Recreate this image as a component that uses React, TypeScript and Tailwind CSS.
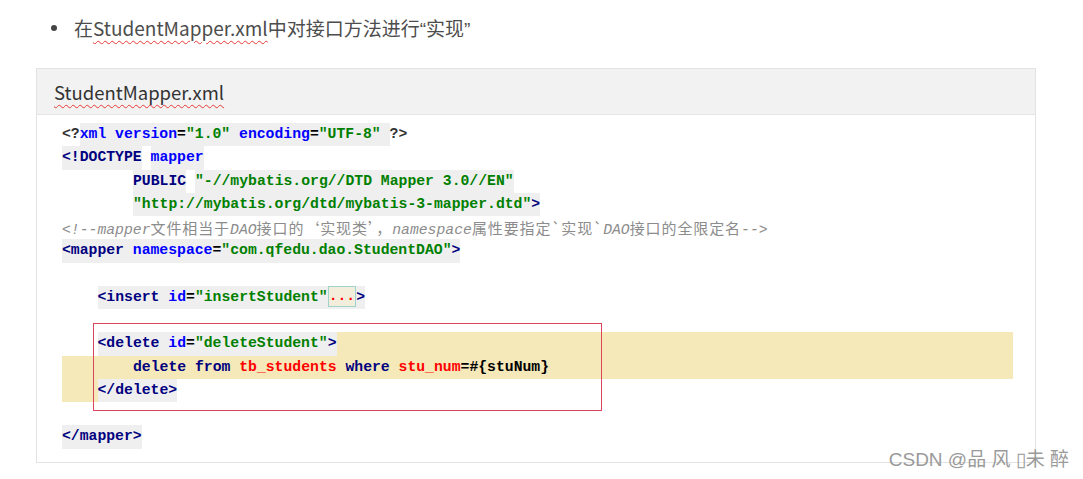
import React from "react";

const TAG = "text-[#000080]";
const ATTR = "text-[#0000ff]";
const STR = "text-[#008000]";
const SQL = "text-[#ff0000]";
const HL = "bg-[#efefef]";
const SEL = "bg-[#f5e9b9]";

function Row({ children, className = "" }: { children?: React.ReactNode; className?: string }) {
    return <div className={`flex h-[23.25px] items-stretch whitespace-pre leading-[23.25px] ${className}`}>{children}</div>;
}

function Seg({ children, className = "" }: { children?: React.ReactNode; className?: string }) {
    return <span className={`block whitespace-pre ${className}`}>{children}</span>;
}

function Cjk({ children }: { children: React.ReactNode }) {
    return <span className="font-['Noto_Sans_CJK_SC'] text-[15px] font-normal not-italic tracking-[0.9px]">{children}</span>;
}

export default function App() {
    return (
        <div className="relative h-[479px] w-[1083px] overflow-hidden bg-white">
            <div className="flex h-[56px] items-center pl-[51px]">
                <span className="h-[6px] w-[6px] rounded-full bg-[#444]" />
                <p className="ml-[17px] font-['Noto_Sans_CJK_SC',sans-serif] text-[19px] leading-none text-[#4d4d4d]">
                    在
                    <span className="underline decoration-[#e53935] decoration-wavy decoration-1 underline-offset-[4px]">
                        StudentMapper.xml
                    </span>
                    中对接口方法进行<span className="font-['Liberation_Sans']">“</span>实现
                    <span className="font-['Liberation_Sans']">”</span>
                </p>
            </div>

            <div className="ml-[36px] mt-[12px] h-[395px] w-[1000px] border border-[#e3e3e3]">
                <div className="flex h-[46px] items-center border-b border-[#e6e6e6] bg-[#f2f2f2] pl-[17px] pt-[2px]">
                    <span className="font-['Noto_Sans_CJK_SC',sans-serif] text-[18.5px] leading-none text-[#333] underline decoration-[#e53935] decoration-wavy decoration-1 underline-offset-[4px]">
                        StudentMapper.xml
                    </span>
                </div>

                <div className="ml-[25px] w-[951px] pt-[8px] font-['Liberation_Mono',monospace] text-[14.75px] font-bold text-[#000]">
                    <Row>
                        <Seg className="text-[#333]">{"<?"}</Seg>
                        <Seg className={HL}>
                            <span className={ATTR}>xml version</span>=<span className={STR}>"1.0"</span>{" "}
                            <span className={ATTR}>encoding</span>=<span className={STR}>"UTF-8"</span>{" "}
                        </Seg>
                        <Seg className="text-[#333]">{"?>"}</Seg>
                    </Row>
                    <Row>
                        <Seg className={`${HL} ${TAG}`}>{"<!DOCTYPE"}</Seg>
                        <Seg>{" "}</Seg>
                        <Seg className={`${HL} ${ATTR}`}>mapper</Seg>
                    </Row>
                    <Row>
                        <Seg className="w-[71px]" />
                        <Seg className={`${HL} ${TAG}`}>PUBLIC</Seg>
                        <Seg>{" "}</Seg>
                        <Seg className={`${HL} ${STR}`}>"-//mybatis.org//DTD Mapper 3.0//EN"</Seg>
                    </Row>
                    <Row>
                        <Seg className="w-[71px]" />
                        <Seg className={HL}>
                            <span className={STR}>"http://mybatis.org/dtd/mybatis-3-mapper.dtd"</span>
                            <span className={TAG}>{">"}</span>
                        </Seg>
                    </Row>
                    <Row>
                        <Seg className="font-normal italic text-[#8c8c8c]">
                            {"<!--mapper"}
                            <Cjk>文件相当于</Cjk>DAO<Cjk>接口的‘实现类’，</Cjk>namespace<Cjk>属性要指定`实现`</Cjk>DAO
                            <Cjk>接口的全限定名</Cjk>
                            {"-->"}
                        </Seg>
                    </Row>
                    <Row>
                        <Seg className={HL}>
                            <span className={TAG}>{"<mapper "}</span>
                            <span className={ATTR}>namespace</span>=<span className={STR}>"com.qfedu.dao.StudentDAO"</span>
                            <span className={TAG}>{">"}</span>
                        </Seg>
                    </Row>
                    <Row />
                    <Row>
                        <Seg className="w-[35.5px]" />
                        <Seg className={HL}>
                            <span className={TAG}>{"<insert "}</span>
                            <span className={ATTR}>id</span>=<span className={STR}>"insertStudent"</span>
                            <span className="inline-block h-[21px] border border-[#9fd3cc] bg-[#f3eedc] align-middle leading-[19px] text-[#ff0000]">
                                ...
                            </span>
                            <span className={TAG}>{">"}</span>
                        </Seg>
                    </Row>
                    <Row />
                    <Row>
                        <Seg className="w-[35.5px]" />
                        <Seg className={HL}>
                            <span className={TAG}>{"<delete "}</span>
                            <span className={ATTR}>id</span>=<span className={STR}>"deleteStudent"</span>
                            <span className={TAG}>{">"}</span>
                        </Seg>
                        <span className={`flex-1 ${SEL}`} />
                    </Row>
                    <Row className={SEL}>
                        <Seg className="w-[71px]" />
                        <Seg>
                            <span className={TAG}>delete from </span>
                            <span className={SQL}>tb_students</span>
                            <span className={TAG}> where </span>
                            <span className={SQL}>stu_num</span>=#{"{"}stuNum{"}"}
                        </Seg>
                    </Row>
                    <Row>
                        <Seg className={`w-[35.5px] ${SEL}`} />
                        <Seg className={`${HL} ${TAG}`}>{"</delete>"}</Seg>
                    </Row>
                    <Row />
                    <Row>
                        <Seg className={`${HL} ${TAG}`}>{"</mapper>"}</Seg>
                    </Row>
                </div>
            </div>

            <div className="pointer-events-none absolute left-[93px] top-[323px] h-[88px] w-[509px] border border-[#d9465c]" />

            <span className="absolute right-[14px] top-[450px] font-['Liberation_Sans','Noto_Sans_CJK_SC',sans-serif] text-[19px] leading-none text-[#9a9a9a]">
                CSDN @品 风 ▯未 醉
            </span>
        </div>
    );
}
